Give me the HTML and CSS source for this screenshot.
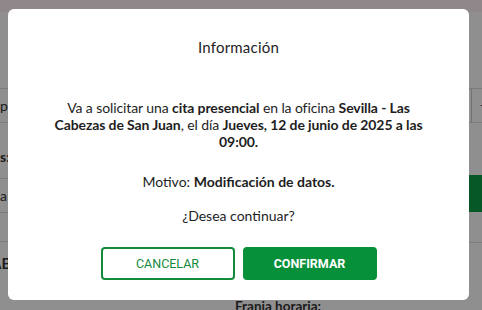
FILE: index.html
```html
<!DOCTYPE html>
<html lang="es">
<head>
<meta charset="UTF-8">
<meta name="viewport" content="width=device-width, initial-scale=1.0">
<title>Cita previa</title>
<link rel="stylesheet" href="styles.css">
</head>
<body>

<div class="page">
    <div class="topbar"></div>
    <div class="columns">
        <div class="col-left">
            <div class="row">p</div>
            <div class="label">s:</div>
            <div class="row">a</div>
            <div class="row empty"></div>
            <div class="title-cut">AB</div>
        </div>
        <div class="col-right">
            <div class="row"><span class="select">-</span></div>
            <div class="green-btn"></div>
            <div class="row-line"></div>
            <div class="franja">Franja horaria:</div>
        </div>
    </div>
</div>

<div class="backdrop"></div>

<div class="modal">
    <h2 class="modal-title">Información</h2>
    <p class="modal-text">
        Va a solicitar una <b>cita presencial</b> en la oficina <b>Sevilla - Las Cabezas de San Juan</b>, el día <b>Jueves, 12 de junio de 2025 a las 09:00.</b>
    </p>
    <p class="modal-reason">Motivo: <b>Modificación de datos.</b></p>
    <p class="modal-question">¿Desea continuar?</p>
    <div class="modal-actions">
        <button class="btn btn-outline">CANCELAR</button>
        <button class="btn btn-primary">CONFIRMAR</button>
    </div>
</div>

</body>
</html>
```

FILE: styles.css
```css
* {
    box-sizing: border-box;
}
body {
    margin: 0;
    font-family: Lato, 'Noto Sans', sans-serif;
    color: #222;
    background: #fff;
    overflow: hidden;
}

/* page behind the dialog */
.page {
    height: 310px;
}
.topbar {
    height: 12px;
    background: #fff0f5;
}
.columns {
    display: grid;
    grid-template-columns: 232px 1fr;
    column-gap: 3px;
}
.col-left {
    padding-top: 76px;
    font-size: 14px;
    color: #333;
}
.col-left .row {
    height: 35px;
    line-height: 34px;
    border-top: 1px solid #ddd;
    border-bottom: 1px solid #ddd;
}
.col-left .label {
    height: 55px;
    padding-top: 24px;
    line-height: 20px;
    font-weight: bold;
}
.col-left .row.empty {
    border-top: none;
    height: 29px;
}
.col-left .title-cut {
    padding-top: 12px;
    font-weight: bold;
    font-size: 15px;
    margin-left: -9px;
}
.col-right {
    padding-top: 76px;
    font-size: 14px;
}
.col-right .row {
    height: 35px;
    border-top: 1px solid #ddd;
    border-bottom: 1px solid #ddd;
    padding-left: 236px;
}
.col-right .select {
    display: block;
    height: 33px;
    line-height: 30px;
    border-left: 1px solid #ccc;
    padding-left: 8px;
    font-size: 10px;
}
.green-btn {
    margin-top: 52px;
    margin-left: 234px;
    height: 37px;
    background: #0c9e44;
}
.row-line {
    margin-top: 30px;
    border-top: 1px solid #ddd;
}
.franja {
    margin-top: 55px;
    font-weight: bold;
    font-size: 13.5px;
    color: #333;
}

/* dialog */
.backdrop {
    position: fixed;
    inset: 0;
    background: rgba(0, 0, 0, 0.44);
}
.modal {
    position: fixed;
    left: 8px;
    top: 9px;
    width: 461px;
    height: 291px;
    background: #fff;
    border-radius: 6px;
    padding: 28px 40px 20px;
    text-align: center;
    font-size: 14px;
    line-height: 17px;
    color: #1e1e1e;
}
.modal-title {
    margin: 0;
    font-size: 15px;
    font-weight: normal;
    line-height: 20px;
    letter-spacing: 0.2px;
}
.modal-text {
    margin: 42px 0 0;
    letter-spacing: -0.1px;
}
.modal-reason {
    margin: 23px 0 0;
}
.modal-question {
    margin: 17px 0 0;
}
.modal-actions {
    display: flex;
    justify-content: center;
    gap: 8px;
    margin-top: 23px;
}
.btn {
    width: 134px;
    height: 33px;
    border-radius: 4px;
    font-family: Roboto, Arial, sans-serif;
    font-size: 12.5px;
    cursor: pointer;
}
.btn-outline {
    background: #fff;
    border: 2px solid #148a3c;
    color: #148a3c;
}
.btn-primary {
    background: #06903a;
    border: 2px solid #06903a;
    color: #fff;
    font-weight: bold;
}
```
